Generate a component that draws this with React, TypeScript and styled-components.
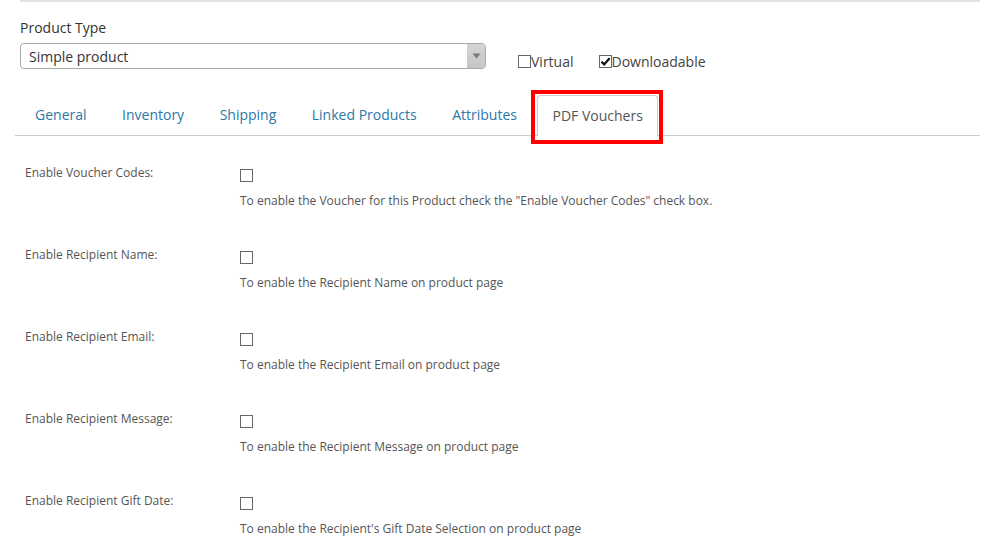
import React from "react";
import styled, { createGlobalStyle } from "styled-components";

const GlobalStyle = createGlobalStyle`
  body {
    margin: 0;
    background: #fff;
    font-family: "Open Sans", "Noto Sans", sans-serif;
  }
`;

const fields = [
  {
    label: "Enable Voucher Codes:",
    help: 'To enable the Voucher for this Product check the "Enable Voucher Codes" check box.',
  },
  { label: "Enable Recipient Name:", help: "To enable the Recipient Name on product page" },
  { label: "Enable Recipient Email:", help: "To enable the Recipient Email on product page" },
  { label: "Enable Recipient Message:", help: "To enable the Recipient Message on product page" },
  {
    label: "Enable Recipient Gift Date:",
    help: "To enable the Recipient's Gift Date Selection on product page",
  },
];

const tabs = ["General", "Inventory", "Shipping", "Linked Products", "Attributes", "PDF Vouchers"];

const CheckBox = ({ checked }: { checked?: boolean }) => (
  <Box>
    {checked && (
      <svg width="11" height="11" viewBox="0 0 11 11">
        <path d="M1.5 5.8 L4.2 8.4 L9.6 2.2" fill="none" stroke="#111" strokeWidth="2.2" />
      </svg>
    )}
  </Box>
);

export default function App() {
  return (
    <>
      <GlobalStyle />
      <Page>
        <TopRule />
        <Header>
          <FieldTitle>Product Type</FieldTitle>
          <TypeRow>
            <Select>
              <SelectValue>Simple product</SelectValue>
              <SelectArrow>
                <svg width="9" height="6" viewBox="0 0 9 6">
                  <path d="M0.5 0.5 H8.5 L4.5 5.5 Z" fill="#777" />
                </svg>
              </SelectArrow>
            </Select>
            <Options>
              <Option>
                <CheckBox />
                Virtual
              </Option>
              <Option>
                <CheckBox checked />
                Downloadable
              </Option>
            </Options>
          </TypeRow>
        </Header>

        <Tabs>
          {tabs.map((t) => (
            <Tab key={t} active={t === "PDF Vouchers"}>
              {t}
            </Tab>
          ))}
        </Tabs>

        <Fields>
          {fields.map((f) => (
            <FieldRow key={f.label}>
              <Label>{f.label}</Label>
              <Control>
                <CheckBox />
                <Help>{f.help}</Help>
              </Control>
            </FieldRow>
          ))}
        </Fields>
      </Page>
    </>
  );
}

const Page = styled.div`
  padding: 0 11px 0 15px;
`;

const TopRule = styled.div`
  margin-left: 5px;
  height: 2px;
  background: #e2e2e2;
`;

const Header = styled.div`
  padding: 16px 0 0 5px;
`;

const FieldTitle = styled.div`
  font-size: 14px;
  line-height: 20px;
  color: #333;
  margin-bottom: 5px;
`;

const TypeRow = styled.div`
  display: flex;
  align-items: flex-start;
  gap: 32px;
`;

const Select = styled.div`
  width: 466px;
  height: 26px;
  box-sizing: border-box;
  border: 1px solid #aaa;
  border-radius: 4px;
  display: flex;
  align-items: center;
  overflow: hidden;
  background: #fff;
`;

const SelectValue = styled.div`
  flex: 1;
  padding-left: 8px;
  font-size: 14px;
  color: #333;
`;

const SelectArrow = styled.div`
  width: 18px;
  height: 100%;
  background: linear-gradient(#d4d4d4, #c6c6c6);
  display: flex;
  align-items: center;
  justify-content: center;
`;

const Options = styled.div`
  display: flex;
  gap: 25px;
  padding-top: 9px;
`;

const Option = styled.label`
  display: flex;
  align-items: center;
  font-size: 14px;
  line-height: 19px;
  color: #444;
`;

const Box = styled.span`
  width: 13px;
  height: 13px;
  box-sizing: border-box;
  border: 1px solid #666;
  background: #fff;
  display: inline-flex;
  align-items: center;
  justify-content: center;
  flex-shrink: 0;
`;

const Tabs = styled.div`
  display: flex;
  align-items: flex-end;
  margin-top: 24px;
  padding-left: 5px;
  border-bottom: 1px solid #ccc;
`;

const Tab = styled.div<{ active?: boolean }>`
  position: relative;
  height: 40px;
  box-sizing: border-box;
  padding: 0 15px 2px;
  margin-right: 5.5px;
  display: flex;
  align-items: center;
  font-size: 14px;
  color: ${({ active }) => (active ? "#555" : "#2b78a8")};
  background: #fff;

  ${({ active }) =>
    active &&
    `
    padding: 0 14px 2px;
    border: 1px solid #ccc;
    border-bottom: none;
    border-radius: 4px 4px 0 0;
    height: 41px;
    margin-bottom: -1px;

    &::after {
      content: "";
      position: absolute;
      top: -6px;
      left: -7px;
      right: -6px;
      bottom: -8px;
      border: 4px solid #f00;
    }
  `}
`;

const Fields = styled.div`
  padding: 28px 0 0 10px;
`;

const FieldRow = styled.div`
  display: grid;
  grid-template-columns: 215px 1fr;
  height: 82px;
`;

const Label = styled.div`
  font-size: 12px;
  line-height: 18px;
  color: #555;
`;

const Control = styled.div`
  padding-top: 5px;
  display: flex;
  flex-direction: column;
  align-items: flex-start;
  gap: 10px;
`;

const Help = styled.div`
  font-size: 12px;
  line-height: 18px;
  color: #555;
`;
